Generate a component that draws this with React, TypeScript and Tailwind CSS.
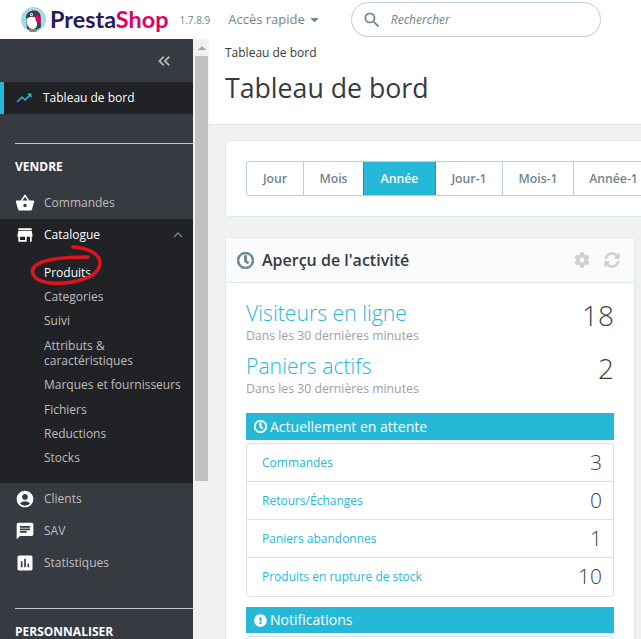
import React from "react";
import { MdShoppingBasket, MdStore, MdAccountCircle, MdChat, MdAssessment, MdTrendingUp, MdExpandLess, MdSearch, MdKeyboardDoubleArrowLeft } from "react-icons/md";
import { FaCaretDown, FaCog, FaSyncAlt, FaRegClock, FaExclamationCircle } from "react-icons/fa";

function Logo() {
  return (
    <svg width="25" height="25" viewBox="0 0 25 25" className="shrink-0">
      <circle cx="12.5" cy="12.5" r="12.5" fill="#a3dbe8" />
      <path d="M5 10c0-4 4-6.500 8-6.500 3.500 0 6 2 6.500 5L20 20c-3 3.500-10 4-14 1.500z" fill="#3c3f49" />
      <path d="M5.500 12c2.500-2.500 6-3 9-1.500l1.500 5.500c.5 3-1 5.500-4 6-3 0-5-2-6-5z" fill="#ffffff" />
      <circle cx="10.500" cy="7.500" r="1.500" fill="#ffffff" />
      <circle cx="10.500" cy="7.500" r=".6" fill="#251b5b" />
      <path d="M14.500 6.500L20 11l-1.500 5.500-4-3z" fill="#df0067" />
      <path d="M7 22h10l-2 3h-6z" fill="#8d8574" />
    </svg>
  );
}

function Section({ label }: { label: string }) {
  return (
    <div className="ml-[15px] border-t border-[#bbcdd2] pt-[15px] text-[12px] leading-[16px] font-bold text-white">{label}</div>
  );
}

function NavItem({ icon, label, active }: { icon: React.ReactNode; label: string; active?: boolean }) {
  return (
    <div className={`flex h-[32px] items-center pl-[15px] text-[12px] ${active ? "text-white" : "text-[#bebebe]"}`}>
      <span className="flex w-[29px] shrink-0 items-center text-white">{icon}</span>
      {label}
    </div>
  );
}

function SubItem({ children, active }: { children: React.ReactNode; active?: boolean }) {
  return <div className={`py-[4.700px] pl-[44px] pr-[8px] text-[12px] leading-[15px] ${active ? "text-white" : "text-[#bebebe]"}`}>{children}</div>;
}

const ranges = [
  { label: "Jour", w: "w-[57px]" },
  { label: "Mois", w: "w-[60px]" },
  { label: "Année", w: "-ml-px w-[73px]", active: true },
  { label: "Jour-1", w: "w-[67px]" },
  { label: "Mois-1", w: "w-[71px]" },
  { label: "Année-1", w: "w-[80px]" },
];

function Stat({ title, value }: { title: string; value: string }) {
  return (
    <div className="flex items-start justify-between">
      <div>
        <div className="text-[21.200px] leading-[28px] font-light text-[#25b9d7]">{title}</div>
        <div className="mt-[1px] text-[12.250px] leading-[16px] text-[#a0a0a0]">Dans les 30 dernières minutes</div>
      </div>
      <div className="-mt-[3px] text-[28px] leading-[38px] font-light text-[#414141]">{value}</div>
    </div>
  );
}

function Bar({ icon, label, h }: { icon: React.ReactNode; label: string; h: string }) {
  return (
    <div className={`flex items-center gap-[3px] bg-[#25b9d7] pl-[8px] text-[14px] text-white ${h}`}>
      {icon}
      <span className="pb-[1px]">{label}</span>
    </div>
  );
}

const rows = [
  ["Commandes", "3"],
  ["Retours/Échanges", "0"],
  ["Paniers abandonnes", "1"],
  ["Produits en rupture de stock", "10"],
];

export default function App() {
  return (
    <div className="h-[639px] w-[641px] overflow-hidden bg-white font-['Open_Sans',sans-serif]">
      <header className="flex h-[39px] items-center bg-white">
        <div className="ml-[21px]"><Logo /></div>
        <span className="ml-[4px] font-['Lato',sans-serif] text-[23.400px] leading-none font-bold text-[#251b5b]">
          Presta<span className="text-[#df0067]">Shop</span>
        </span>
        <span className="ml-[11px] pt-[1px] text-[10px] text-[#6c868e]">1.7.8.9</span>
        <span className="ml-[18px] flex items-center gap-[3px] text-[13px] text-[#6c868e]">
          Accès rapide <FaCaretDown className="h-[13px] w-[13px]" />
        </span>
        <div className="ml-[30px] flex h-[35px] w-[250px] items-center rounded-[18px] border border-[#bbcdd2] pl-[10px] text-[#6c868e]">
          <MdSearch className="h-[20px] w-[20px]" />
          <span className="ml-[9px] pt-[1px] text-[12px] italic">Rechercher</span>
        </div>
      </header>
      <div className="flex h-[600px]">
        <aside className="h-full w-[193px] shrink-0 overflow-hidden bg-[#363a41]">
          <div className="flex h-[43px] items-center justify-end pr-[19px] text-[#bebebe]">
            <MdKeyboardDoubleArrowLeft className="h-[20px] w-[20px]" />
          </div>
          <div className="flex h-[32px] items-center border-l-4 border-[#25b9d7] bg-[#202226] pl-[11px] text-[12px] text-white">
            <MdTrendingUp className="mr-[10px] h-[18px] w-[18px] text-[#25b9d7]" />
            Tableau de bord
          </div>
          <div className="mt-[29px]"><Section label="VENDRE" /></div>
          <div className="mt-[12px]">
            <NavItem icon={<MdShoppingBasket className="h-[20px] w-[20px]" />} label="Commandes" />
          </div>
          <div className="h-[264px] bg-[#202226]">
            <div className="flex items-center justify-between pr-[6px]">
              <NavItem active icon={<MdStore className="h-[20px] w-[20px]" />} label="Catalogue" />
              <MdExpandLess className="h-[18px] w-[18px] text-[#6c868e]" />
            </div>
            <div className="pt-[9px]">
              <SubItem active>Produits</SubItem>
              <SubItem>Categories</SubItem>
              <SubItem>Suivi</SubItem>
              <SubItem>Attributs &amp; caractéristiques</SubItem>
              <SubItem>Marques et fournisseurs</SubItem>
              <SubItem>Fichiers</SubItem>
              <SubItem>Reductions</SubItem>
              <SubItem>Stocks</SubItem>
            </div>
          </div>
          <div>
            <NavItem icon={<MdAccountCircle className="h-[20px] w-[20px]" />} label="Clients" />
            <NavItem icon={<MdChat className="h-[20px] w-[20px]" />} label="SAV" />
            <NavItem icon={<MdAssessment className="h-[20px] w-[20px]" />} label="Statistiques" />
          </div>
          <div className="mt-[29px]"><Section label="PERSONNALISER" /></div>
        </aside>
        <div className="flex h-full w-[16px] shrink-0 flex-col items-center bg-[#f1f1f1] pl-[1px]">
          <div className="mt-[7px] h-0 w-0 border-x-[4px] border-b-[4px] border-x-transparent border-b-[#a3a3a3]" />
          <div className="mt-[6px] h-[425px] w-[13px] bg-[#c1c1c1]" />
        </div>
        <main className="min-w-0 flex-1 overflow-hidden bg-[#eff1f2]">
          <div className="h-[86px] border-b border-[#dfe3e5] bg-white pl-[16px]">
            <div className="pt-[5px] text-[12px] leading-[17px] text-[#363a41]">Tableau de bord</div>
            <div className="mt-[8px] text-[26.700px] leading-[37px] text-[#363a41]">Tableau de bord</div>
          </div>
          <div className="mt-[15px] ml-[16px] flex h-[77px] w-[500px] items-start rounded-[4px] border border-[#dfe8eb] bg-white pt-[20px] pl-[20px]">
            <div className="flex h-[35px] overflow-hidden rounded-l-[4px] border-y border-l border-[#bbcdd2]">
              {ranges.map((r) => (
                <div key={r.label} className={`flex items-center justify-center border-r pt-[1px] text-[12.250px] font-semibold ${r.w} ${r.active ? "-my-px border border-[#1a96ae] bg-[#25b9d7] font-bold text-white" : "border-[#bbcdd2] text-[#6c868e]"}`}>
                  {r.label}
                </div>
              ))}
            </div>
          </div>
          <section className="mt-[20px] ml-[16px] h-[500px] w-[410px] rounded-[4px] border border-[#dfe8eb] bg-white">
            <div className="flex h-[45px] items-center justify-between border-b border-[#dbe6e9] bg-[#fafbfc] pr-[14px] pl-[11px]">
              <div className="flex items-center gap-[8px] text-[16px] font-semibold text-[#363a41]">
                <FaRegClock className="h-[17px] w-[17px] text-[#6c868e]" stroke="currentColor" strokeWidth={30} />
                Aperçu de l'activité
              </div>
              <div className="flex items-center gap-[14px] text-[#cfcfcf]">
                <FaCog className="h-[16px] w-[16px]" />
                <FaSyncAlt className="h-[16px] w-[16px]" />
              </div>
            </div>
            <div className="px-[20px] pt-[16px]">
              <Stat title="Visiteurs en ligne" value="18" />
              <div className="mt-[8px]"><Stat title="Paniers actifs" value="2" /></div>
              <div className="mt-[16px]">
                <Bar h="h-[27px]" icon={<FaRegClock className="h-[13px] w-[13px]" stroke="currentColor" strokeWidth={30} />} label="Actuellement en attente" />
              </div>
              <div className="mt-[3px] rounded-[4px] border border-[#dedede]">
                {rows.map(([label, value], i) => (
                  <div key={label} className={`flex h-[38px] items-center justify-between pr-[11px] pl-[15px] ${i < 3 ? "border-b border-[#dedede]" : ""}`}>
                    <span className="text-[12px] text-[#25b9d7]">{label}</span>
                    <span className="text-[21px] font-light text-[#414141]">{value}</span>
                  </div>
                ))}
              </div>
              <div className="mt-[10px]">
                <Bar h="h-[26px]" icon={<FaExclamationCircle className="h-[13px] w-[13px]" />} label="Notifications" />
              </div>
              <div className="mt-[3px] h-[60px] rounded-[4px] border border-[#dedede]" />
            </div>
          </section>
        </main>
      </div>
      <svg className="pointer-events-none absolute top-0 left-0" width="641" height="639" fill="none">
        <path d="M73 247C85 248 99 252 100 262C100 274 88 279 72 282C55 285 36 283 33 274C30 265 42 261 55 259C67 257 78 257 88 257" stroke="#e0141c" strokeWidth="3.500" strokeLinecap="round" />
      </svg>
    </div>
  );
}
